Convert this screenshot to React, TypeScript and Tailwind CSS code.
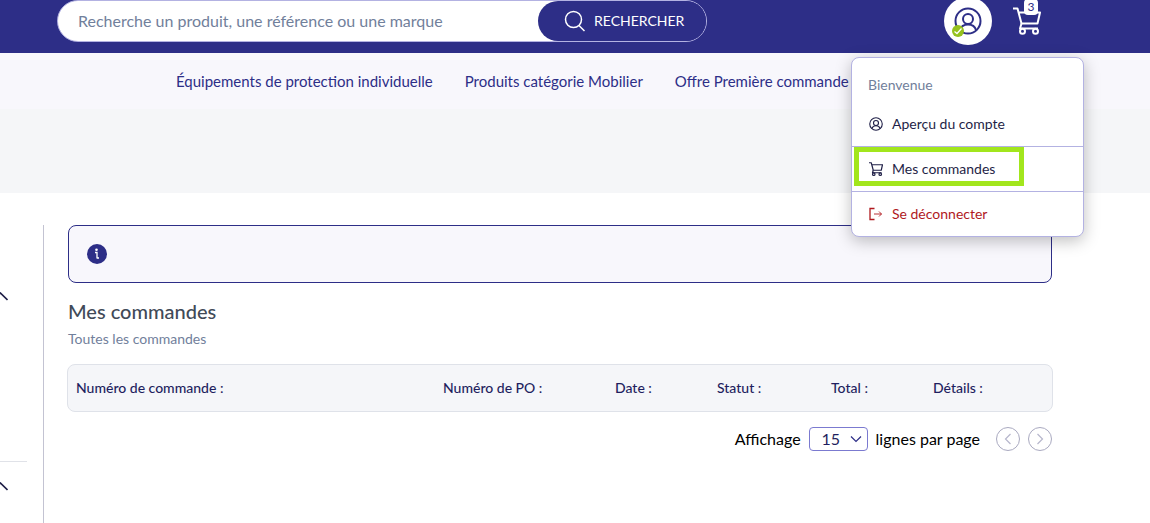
import React from "react";

const navLinks = [
  "Équipements de protection individuelle",
  "Produits catégorie Mobilier",
  "Offre Première commande",
];

const columns = [
  { label: "Numéro de commande :", width: "w-auto" },
  { label: "Numéro de PO :", width: "w-[172px]" },
  { label: "Date :", width: "w-[102px]" },
  { label: "Statut :", width: "w-[114px]" },
  { label: "Total :", width: "w-[102px]" },
  { label: "Détails :", width: "w-[127px]" },
];

function UserIcon({ className, strokeWidth = 1.5 }: { className?: string; strokeWidth?: number }) {
  return (
    <svg viewBox="0 0 28 28" className={className} fill="none" stroke="currentColor" strokeWidth={strokeWidth} aria-hidden="true">
      <circle cx="14" cy="14" r="12.5" />
      <circle cx="14" cy="12" r="5" />
      <path d="M6 23c1-3.500 4-5.500 8-5.500s7 2 8 5.500" />
    </svg>
  );
}

function CartIcon({ className, strokeWidth = 2 }: { className?: string; strokeWidth?: number }) {
  return (
    <svg viewBox="0 0 28 28" className={className} fill="none" stroke="currentColor" strokeWidth={strokeWidth} strokeLinejoin="round" aria-hidden="true">
      <path d="M0 1.500H4.500L8.500 16.500H24.500L27 5.500H5.700" />
      <path d="M8.500 16.500L7 21.500H25" />
      <circle cx="9.500" cy="24.300" r="2.500" />
      <circle cx="22.500" cy="24.300" r="2.500" />
    </svg>
  );
}

function AccountMenu() {
  return (
    <div className="absolute top-[60px] -right-[92px] z-20 w-[233px] rounded-lg border border-[#b3b2e2] bg-white text-sm text-[#1f1f47] shadow-[0_4px_16px_rgba(0,0,0,0.25)]">
      <p className="flex h-[53px] items-center px-4 text-[#71809b]">Bienvenue</p>
      <a href="#compte" className="flex h-[35px] items-start gap-2 px-4 pt-[3px]">
        <UserIcon className="mt-0.5 size-4 p-px" strokeWidth={2.2} />
        <span className="leading-5">Aperçu du compte</span>
      </a>
      <div className="border-y border-[#b3b2e2] pb-[5px] pl-0.5">
        <a
          href="#commandes"
          className="flex h-[39px] w-[170px] items-center gap-2 border-[5px] border-[#a2e61d] pl-[9px]"
        >
          <CartIcon className="mt-1 size-4 p-px" strokeWidth={2.4} />
          <span className="mt-1">Mes commandes</span>
        </a>
      </div>
      <button type="button" className="flex h-11 w-full items-center gap-2 px-4 text-[#b0191e]">
        <svg viewBox="0 0 16 16" className="size-4" fill="none" stroke="currentColor" aria-hidden="true">
          <path d="M6.500 2.500h-4.500v11h4.500" strokeWidth="1.300" />
          <path d="M6 8h7.500M11 5.500L13.500 8L11 10.500" strokeWidth="0.900" />
        </svg>
        Se déconnecter
      </button>
    </div>
  );
}

function Header() {
  return (
    <header className="bg-[#2d2e87] pr-[109px] pb-[11px] pl-[57px]">
      <div className="flex h-[42px] items-center justify-between">
        <form
          role="search"
          onSubmit={(e) => e.preventDefault()}
          className="flex h-[42px] w-[650px] rounded-full border border-[#b3b2e2] bg-[linear-gradient(to_right,white_510px,#2d2e87_510px)]"
        >
          <input
            type="search"
            aria-label="Recherche"
            placeholder="Recherche un produit, une référence ou une marque"
            className="min-w-0 flex-1 rounded-l-full bg-transparent pl-5 text-base outline-none placeholder:text-[#71809b]"
          />
          <button
            type="submit"
            className="flex w-[168px] items-center gap-2 rounded-full bg-[#2d2e87] pl-6 text-sm text-white"
          >
            <svg viewBox="0 0 24 24" className="size-6" fill="none" stroke="currentColor" strokeWidth="1.500" aria-hidden="true">
              <circle cx="11.500" cy="10.500" r="8" />
              <path d="M17 16.500L22.500 22" />
            </svg>
            RECHERCHER
          </button>
        </form>

        <div className="flex items-center gap-[21px]">
          <div className="relative">
            <button
              type="button"
              aria-label="Mon compte"
              className="relative flex size-12 items-center justify-center rounded-full bg-white text-[#2d2e87]"
            >
              <UserIcon className="size-7" strokeWidth={2} />
              <svg viewBox="0 0 12 12" className="absolute bottom-2 left-2 size-3" aria-hidden="true">
                <circle cx="6" cy="6" r="6" fill="#95c11f" />
                <path d="M2.500 6.500L5 8.500L9.500 3.500" fill="none" stroke="white" strokeWidth="1.300" />
              </svg>
            </button>
            <AccountMenu />
          </div>
          <button type="button" aria-label="Panier" className="relative text-white">
            <CartIcon className="size-7" />
            <span className="absolute -top-2 right-[3px] flex h-4 w-3.5 items-end justify-center rounded-sm bg-white text-xs leading-4 text-[#2d2e87]">
              3
            </span>
          </button>
        </div>
      </div>
    </header>
  );
}

function SidebarToggle({ label }: { label: string }) {
  return (
    <button type="button" aria-label={label} className="-ml-2 block text-[#1f1f47]">
      <svg viewBox="0 0 16 16" className="size-4" fill="none" stroke="currentColor" strokeWidth="1.600" aria-hidden="true">
        <path d="M1 12L8.500 5L15.500 12" />
      </svg>
    </button>
  );
}

function Pagination() {
  return (
    <div className="mt-[15px] flex items-center justify-end text-base text-black">
      <label htmlFor="page-size">Affichage</label>
      <div className="relative mx-2">
        <select
          id="page-size"
          defaultValue="15"
          className="block h-6 w-[59px] appearance-none rounded border border-[#7b7ad0] bg-white pl-3 text-base leading-5 text-[#1f1f60]"
        >
          <option>15</option>
          <option>30</option>
          <option>50</option>
        </select>
        <svg viewBox="0 0 12 12" className="pointer-events-none absolute top-1.5 right-1.5 size-3" fill="none" stroke="#2d2e87" strokeWidth="1.200" aria-hidden="true">
          <path d="M1 3.500L6 8.500L11 3.500" />
        </svg>
      </div>
      <span>lignes par page</span>
      <div className="ml-4 flex gap-2 text-[#b6b6cc]">
        <button type="button" aria-label="Page précédente" className="flex size-6 items-center justify-center rounded-full border border-[#a9a9c0]">
          <svg viewBox="0 0 12 12" className="size-3" fill="none" stroke="currentColor" strokeWidth="1.200" aria-hidden="true">
            <path d="M8.500 1L3.500 6L8.500 11" />
          </svg>
        </button>
        <button type="button" aria-label="Page suivante" className="flex size-6 items-center justify-center rounded-full border border-[#a9a9c0]">
          <svg viewBox="0 0 12 12" className="size-3" fill="none" stroke="currentColor" strokeWidth="1.200" aria-hidden="true">
            <path d="M3.500 1L8.500 6L3.500 11" />
          </svg>
        </button>
      </div>
    </div>
  );
}

export default function App() {
  return (
    <div className="flex min-h-screen flex-col bg-white font-[Lato,sans-serif]">
      <Header />

      <nav className="flex h-14 items-center gap-8 bg-[#f8f7fc] pl-44 text-[15px] text-[#2d2e87]">
        {navLinks.map((link) => (
          <a key={link} href="#categorie" className="whitespace-nowrap">
            {link}
          </a>
        ))}
      </nav>
      <div className="h-21 bg-[#f5f6f8]" />

      <div className="mt-8 flex flex-1">
        <aside className="w-11 shrink-0 overflow-hidden border-r border-[#c3c3d2] pt-[63px]">
          <SidebarToggle label="Replier la première section" />
          <div className="mt-[157px] mr-4 border-t border-[#e0e2e8]" />
          <div className="mt-4">
            <SidebarToggle label="Replier la seconde section" />
          </div>
        </aside>

        <main className="min-w-0 flex-1 pr-[98px] pl-6">
          <div className="flex h-[58px] items-center rounded-lg border border-[#2d2e87] bg-[#f8f7fc] px-[18px]">
            <svg viewBox="0 0 20 20" className="size-5" role="img" aria-label="Information">
              <circle cx="10" cy="10" r="10" fill="#2d2e87" />
              <circle cx="9.500" cy="5.800" r="1.300" fill="white" />
              <path d="M8 8.500h2v6M10 14h2" fill="none" stroke="white" strokeWidth="1.300" />
            </svg>
          </div>

          <h1 className="mt-3.5 text-xl leading-7 font-medium text-[#414a58]">Mes commandes</h1>
          <p className="mt-1 text-sm leading-5 text-[#71809b]">Toutes les commandes</p>

          <div className="-mx-px mt-[15px] overflow-hidden rounded-lg border border-[#dfe2e9] bg-[#f5f6f9]">
            <table className="w-full table-fixed text-left text-sm text-[#1f1f60]">
              <thead>
                <tr className="h-[46px]">
                  {columns.map((col) => (
                    <th key={col.label} scope="col" className={`${col.width} px-2 font-medium`}>
                      {col.label}
                    </th>
                  ))}
                </tr>
              </thead>
            </table>
          </div>

          <Pagination />
        </main>
      </div>
    </div>
  );
}
